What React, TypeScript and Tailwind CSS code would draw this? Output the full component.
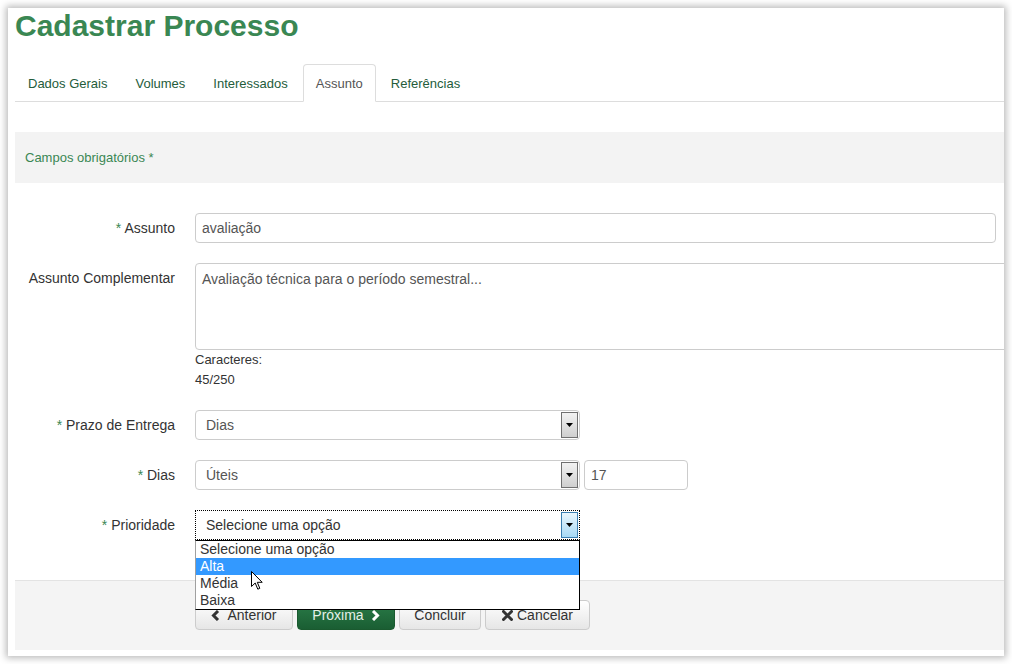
import React from "react";

function Arrow({ hover = false }: { hover?: boolean }) {
  return (
    <div
      className={
        "absolute right-px top-px bottom-px w-[17px] flex items-center justify-center border " +
        (hover
          ? "border-[#3c7fb1] bg-gradient-to-b from-[#eaf6fd] to-[#a7d9f5]"
          : "border-[#707070] bg-gradient-to-b from-[#f2f2f2] to-[#cfcfcf]")
      }
    >
      <svg width="7" height="4" viewBox="0 0 7 4">
        <path d="M0 0H7L3.5 4Z" fill="#000" />
      </svg>
    </div>
  );
}

function ChevLeft({ color = "#333" }: { color?: string }) {
  return (
    <svg width="9" height="11" viewBox="0 0 9 11">
      <path d="M7 1L2.5 5.5L7 10" fill="none" stroke={color} strokeWidth="3" />
    </svg>
  );
}

function ChevRight({ color = "#fff" }: { color?: string }) {
  return (
    <svg width="9" height="11" viewBox="0 0 9 11">
      <path d="M2 1L6.5 5.5L2 10" fill="none" stroke={color} strokeWidth="3" />
    </svg>
  );
}

function HeavyX() {
  return (
    <svg width="11" height="11" viewBox="0 0 11 11">
      <path d="M1.5 1.5L9.5 9.5M9.5 1.5L1.5 9.5" fill="none" stroke="#333" strokeWidth="3" strokeLinecap="round" />
    </svg>
  );
}

function Label({ text, req = true }: { text: string; req?: boolean }) {
  return (
    <div className="w-[160px] shrink-0 text-right text-[14px] leading-[30px] text-[#333]">
      {req && <span className="text-[#3a8753]">* </span>}
      {text}
    </div>
  );
}

export default function App() {
  const tabs = ["Dados Gerais", "Volumes", "Interessados", "Assunto", "Referências"];
  return (
    <div className="min-h-[664px] bg-white p-2 font-['Liberation_Sans',Arial,sans-serif]">
      <div className="relative w-[996px] h-[648px] bg-white shadow-[0_0_7px_2px_rgba(0,0,0,0.28)] overflow-hidden pl-[7px] pt-px">
        <h1 className="text-[30px] font-bold leading-[33px] text-[#3a8753]">Cadastrar Processo</h1>

        <ul className="mt-[22px] flex border-b border-[#dddddd] text-[13px]">
          {tabs.map((t) => {
            const active = t === "Assunto";
            return (
              <li key={t} className="mr-[2px] -mb-px">
                <div
                  className={
                    "px-[12px] pt-[9px] pb-[8px] leading-[19px] border rounded-t-[4px] " +
                    (active
                      ? "border-[#dddddd] border-b-white bg-white text-[#555]"
                      : "border-transparent text-[#245c3b]")
                  }
                >
                  {t}
                </div>
              </li>
            );
          })}
        </ul>

        <div className="mt-[30px] h-[51px] bg-[#f3f3f3] pl-[10px] flex items-center text-[13px] text-[#3a8753]">
          Campos obrigatórios *
        </div>

        <div className="mt-[30px]">
          {/* Assunto */}
          <div className="flex gap-[20px] mb-[20px]">
            <Label text="Assunto" />
            <div className="w-[801px] h-[30px] border border-[#cccccc] rounded-[4px] px-[6px] flex items-center text-[14px] text-[#555]">
              avaliação
            </div>
          </div>

          {/* Assunto Complementar */}
          <div className="flex gap-[20px] mb-[20px]">
            <Label text="Assunto Complementar" req={false} />
            <div className="flex flex-col">
              <div className="w-[860px] h-[87px] border border-[#cccccc] rounded-[4px] px-[6px] pt-[5px] text-[14px] leading-[20px] text-[#555]">
                Avaliação técnica para o período semestral...
              </div>
              <div className="text-[13px] leading-[20px] text-[#333]">Caracteres:</div>
              <div className="text-[13px] leading-[20px] text-[#333]">45/250</div>
            </div>
          </div>

          {/* Prazo de Entrega */}
          <div className="flex gap-[20px] mb-[20px]">
            <Label text="Prazo de Entrega" />
            <div className="relative w-[385px] h-[30px] border border-[#cccccc] rounded-[4px] pl-[10px] flex items-center text-[14px] text-[#555]">
              Dias
              <Arrow />
            </div>
          </div>

          {/* Dias */}
          <div className="flex gap-[20px] mb-[20px]">
            <Label text="Dias" />
            <div className="flex gap-[4px]">
              <div className="relative w-[385px] h-[30px] border border-[#cccccc] rounded-[4px] pl-[10px] flex items-center text-[14px] text-[#555]">
                Úteis
                <Arrow />
              </div>
              <div className="w-[104px] h-[30px] border border-[#cccccc] rounded-[4px] pl-[6px] flex items-center text-[14px] text-[#555]">
                17
              </div>
            </div>
          </div>

          {/* Prioridade */}
          <div className="flex gap-[20px]">
            <Label text="Prioridade" />
            <div className="relative w-[385px] h-[30px] border border-dotted border-black pl-[10px] flex items-center text-[14px] text-[#333]">
              Selecione uma opção
              <Arrow hover />
              <div className="absolute z-10 left-[-1px] top-[29px] w-[385px] border border-black border-l-[#a0a0a0] bg-white text-[14px] leading-[17px] text-[#333]">
                <div className="pl-[4px] h-[17px]">Selecione uma opção</div>
                <div className="pl-[4px] h-[17px] bg-[#3399ff] text-white">Alta</div>
                <div className="pl-[4px] h-[17px]">Média</div>
                <div className="pl-[4px] h-[17px]">Baixa</div>
                <svg
                  className="absolute left-[55px] top-[30px]"
                  width="12"
                  height="19"
                  viewBox="0 0 12 19"
                >
                  <path
                    d="M0.5 0.5V15.5L4.2 12L6.8 18.2L8.8 17.3L6.3 11.3H11.2Z"
                    fill="#fff"
                    stroke="#000"
                    strokeWidth="1"
                    strokeLinejoin="round"
                  />
                </svg>
              </div>
            </div>
          </div>
        </div>

        <div className="mt-[40px] h-[70px] border-t border-[#e3e3e3] bg-[#f4f4f4] pl-[180px] pt-[19px] flex gap-[4px] text-[14px]">
          <div className="w-[98px] h-[30px] border border-[#cccccc] rounded-[4px] bg-gradient-to-b from-white to-[#e6e6e6] flex items-center justify-center gap-[7px] text-[#333]">
            <ChevLeft />
            Anterior
          </div>
          <div className="w-[98px] h-[30px] border border-[#1a5a2f] rounded-[4px] bg-gradient-to-b from-[#2b7d49] to-[#1a5e33] flex items-center justify-center gap-[7px] text-[#e4f0e8]">
            Próxima
            <ChevRight />
          </div>
          <div className="w-[82px] h-[30px] border border-[#cccccc] rounded-[4px] bg-gradient-to-b from-white to-[#e6e6e6] flex items-center justify-center text-[#333]">
            Concluir
          </div>
          <div className="w-[105px] h-[30px] border border-[#cccccc] rounded-[4px] bg-gradient-to-b from-white to-[#e6e6e6] flex items-center justify-center gap-[4px] text-[#333]">
            <HeavyX />
            Cancelar
          </div>
        </div>
      </div>
    </div>
  );
}
